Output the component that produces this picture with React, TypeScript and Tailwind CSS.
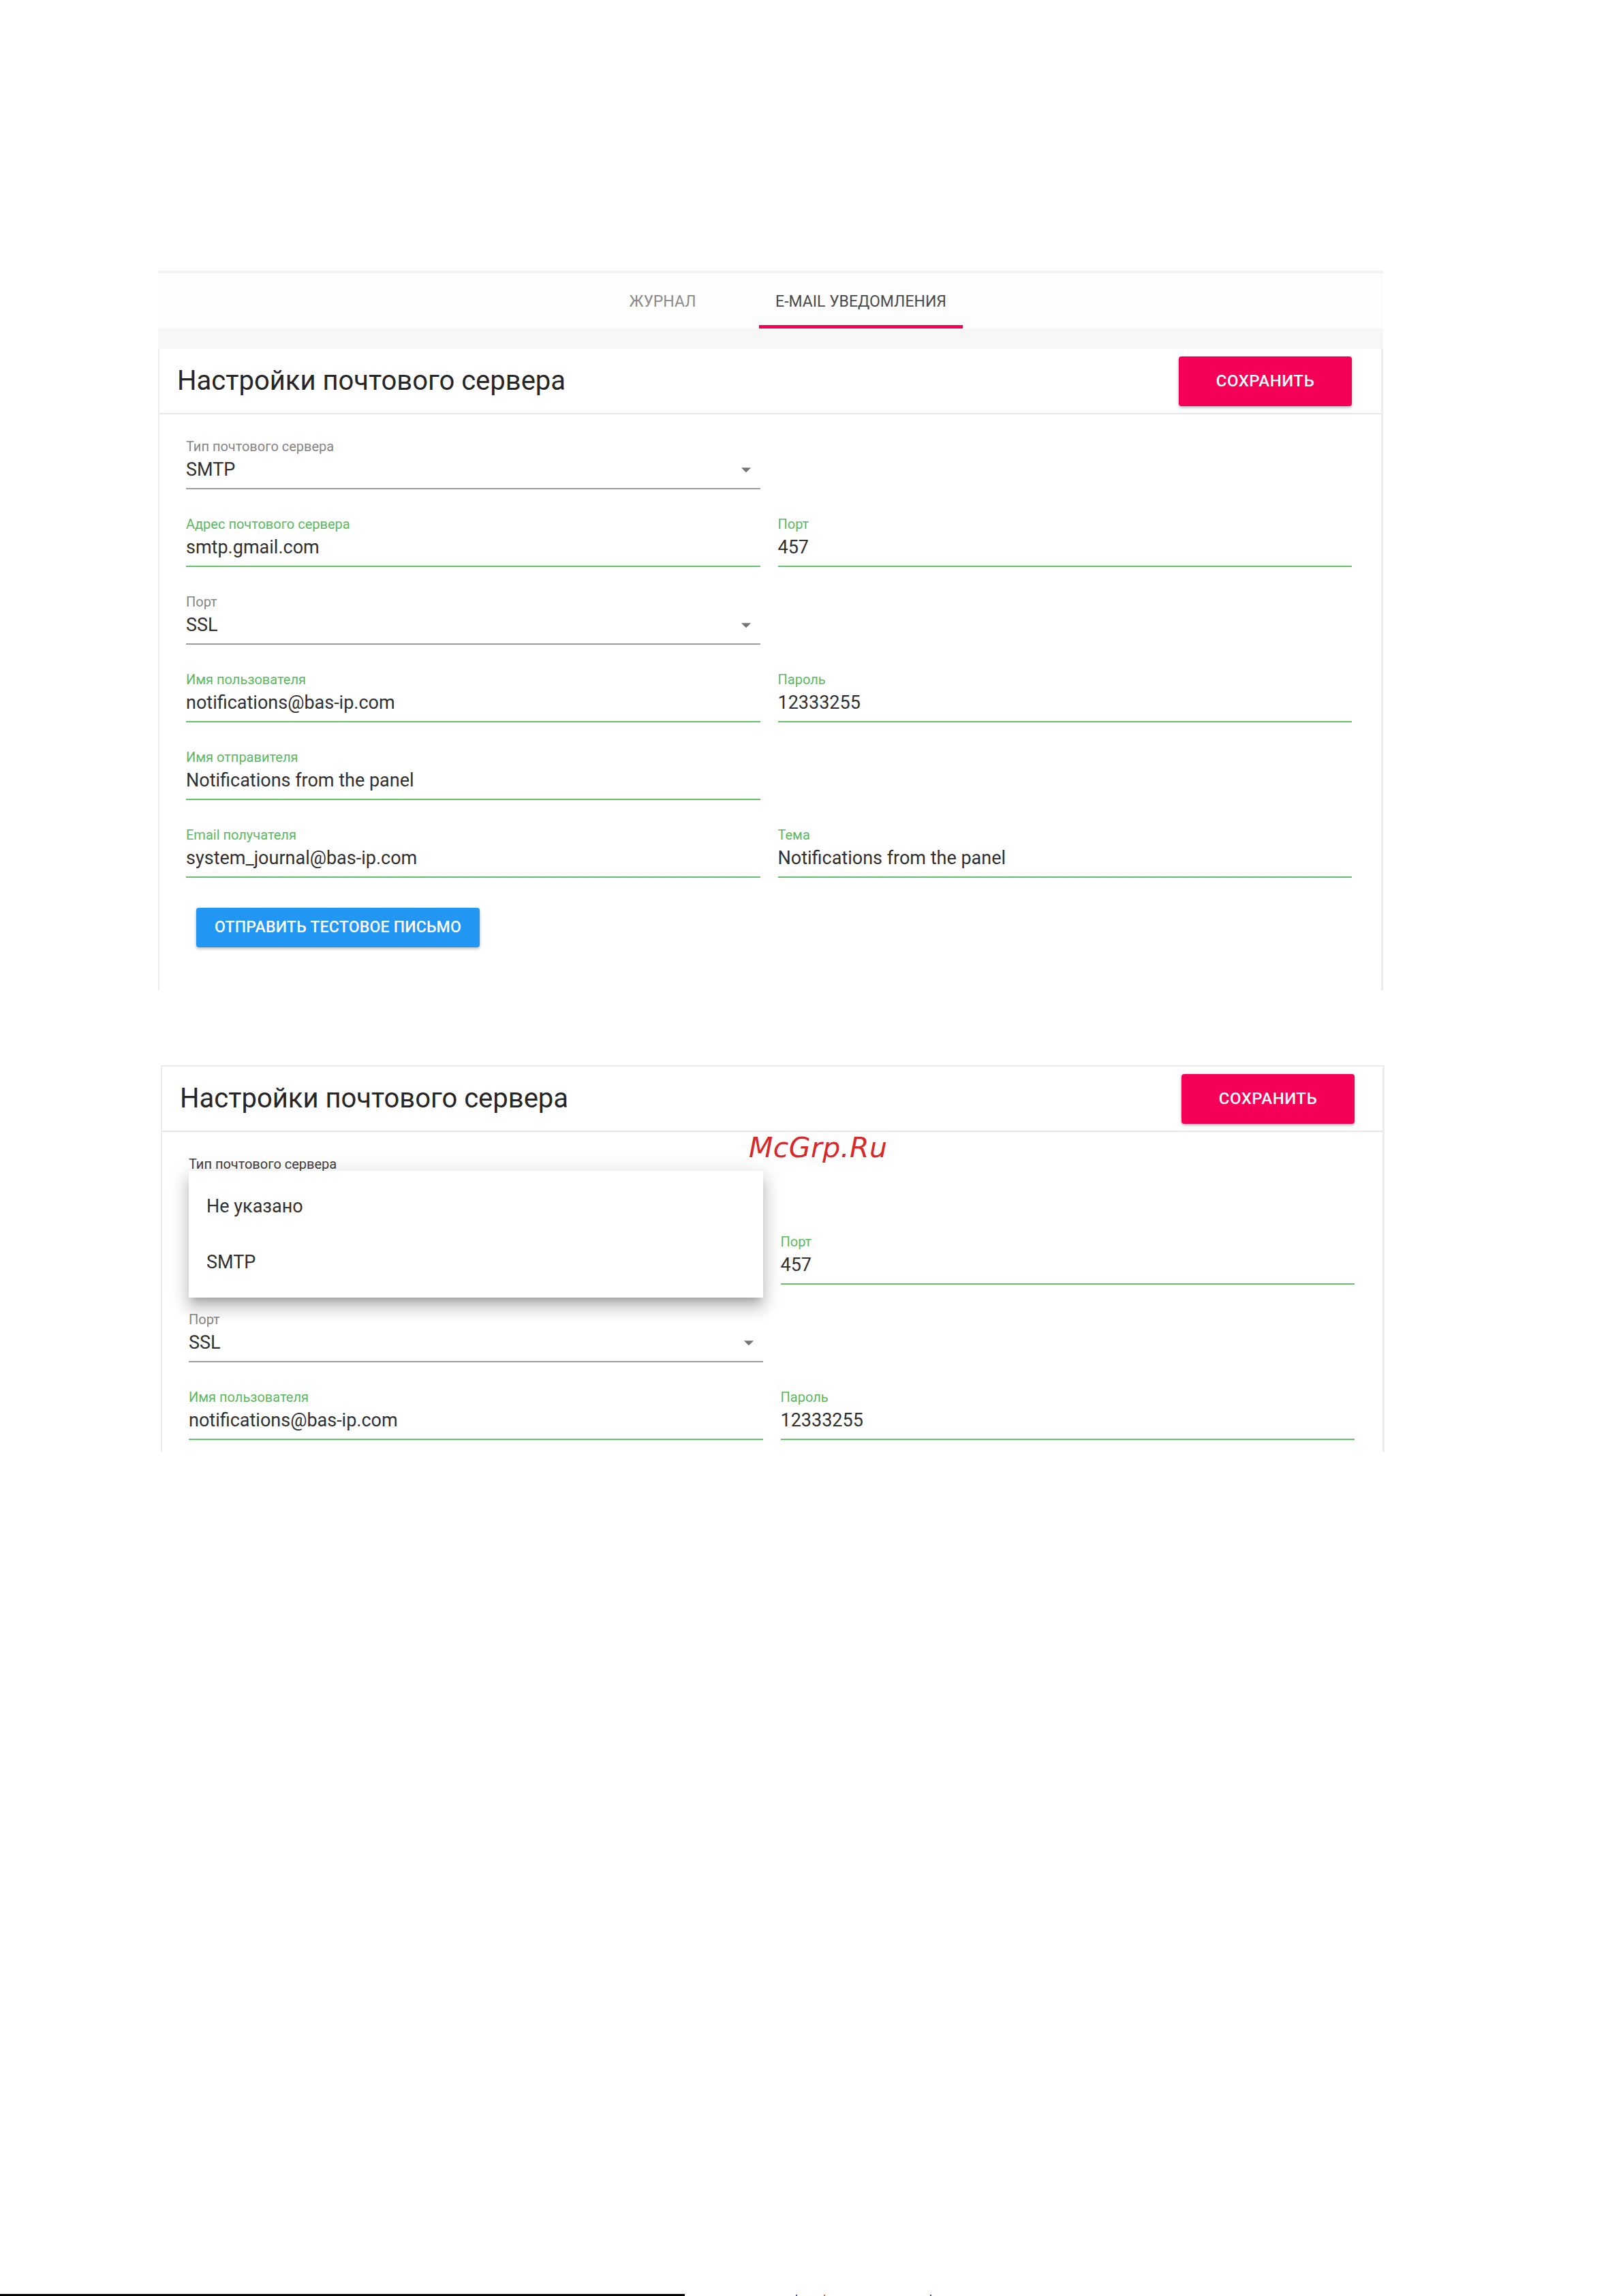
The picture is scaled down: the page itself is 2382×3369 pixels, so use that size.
import React from "react";

type FieldProps = {
  label: string;
  value?: string;
  select?: boolean;
  labelClass?: string;
};

const Arrow = () => (
  <svg
    viewBox="0 0 24 24"
    className="absolute right-[4px] top-0 h-[34px] w-[34px] fill-[#757575]"
  >
    <path d="M7 10l5 5 5-5z" />
  </svg>
);

const Field = ({ label, value, select, labelClass }: FieldProps) => (
  <div className="flex flex-col">
    <div
      className={`text-[20px] leading-[24px] ${
        labelClass ? labelClass : select ? "text-[#858585]" : "text-[#5cb85f]"
      }`}
    >
      {label}
    </div>
    <div
      className={`relative mt-[5px] border-b-2 pb-[10px] ${
        select ? "border-[#9c9c9c]" : "border-[#66bf6a]"
      }`}
    >
      <div className="text-[27px] leading-[34px] text-[#303030]">{value}</div>
      {select && <Arrow />}
    </div>
  </div>
);

const SaveButton = () => (
  <button className="flex h-[73px] w-[254px] items-center justify-center rounded-[4px] bg-[#f50057] text-[24px] font-medium uppercase tracking-[0.02em] text-white shadow-[0_2px_4px_rgba(0,0,0,0.3)]">
    Сохранить
  </button>
);

const CardHeader = ({ pr }: { pr: string }) => (
  <div
    className={`flex h-[96px] items-center justify-between border-b-2 border-[#e6e6e6] pl-[26px] ${pr}`}
  >
    <h2 className="text-[40px] font-normal text-[#262626]">
      Настройки почтового сервера
    </h2>
    <SaveButton />
  </div>
);

const Menu = () => (
  <div className="absolute left-0 top-[22px] z-10 w-full bg-white py-[11px] shadow-[0_10px_10px_-6px_rgba(0,0,0,0.2),0_16px_20px_2px_rgba(0,0,0,0.14),0_6px_28px_4px_rgba(0,0,0,0.12)]">
    {["Не указано", "SMTP"].map((item) => (
      <div
        key={item}
        className="flex h-[82px] items-center pl-[26px] text-[27px] text-[#303030]"
      >
        {item}
      </div>
    ))}
  </div>
);

export default function App() {
  return (
    <div className="flex h-[3369px] flex-col bg-white font-['Roboto',sans-serif]">
      {/* первая панель: вкладки + форма */}
      <div className="ml-[232px] mt-[397px] w-[1798px]">
        <div className="flex h-[85px] justify-center border-t-4 border-[#f3f3f3] bg-[#fdfdfd] pr-[18px] pt-[8px] text-[23px] uppercase">
          <div className="flex w-[283px] items-center justify-center border-b-[5px] border-transparent text-[#8a8a8a]">
            Журнал
          </div>
          <div className="flex w-[299px] items-center justify-center border-b-[5px] border-[#f50057] text-[#4a4a4a]">
            E-mail уведомления
          </div>
        </div>
        <div className="h-[30px] bg-[#f7f7f7]" />

        <div className="border-l-2 border-r-[3px] border-[#ececec] bg-white">
          <CardHeader pr="pr-[43px]" />
          <div className="pb-[63px] pl-[39px] pr-[43px] pt-[35px]">
            <div className="grid grid-cols-2 gap-x-[26px] gap-y-[39px]">
              <Field label="Тип почтового сервера" value="SMTP" select />
              <div />
              <Field label="Адрес почтового сервера" value="smtp.gmail.com" />
              <Field label="Порт" value="457" />
              <Field label="Порт" value="SSL" select />
              <div />
              <Field label="Имя пользователя" value="notifications@bas-ip.com" />
              <Field label="Пароль" value="12333255" />
              <Field label="Имя отправителя" value="Notifications from the panel" />
              <div />
              <Field label="Email получателя" value="system_journal@bas-ip.com" />
              <Field label="Тема" value="Notifications from the panel" />
            </div>
            <button className="ml-[15px] mt-[44px] flex h-[58px] w-[416px] items-center justify-center rounded-[4px] bg-[#2196f3] text-[23px] font-medium uppercase tracking-[0.01em] text-white shadow-[0_2px_4px_rgba(0,0,0,0.3)]">
              Отправить тестовое письмо
            </button>
          </div>
        </div>
      </div>

      {/* вторая панель: открытый список */}
      <div className="relative ml-[236px] mt-[110px] h-[567px] w-[1796px] overflow-hidden border-l-2 border-r-[3px] border-t-2 border-[#ececec] bg-white">
        <CardHeader pr="pr-[41px]" />
        <div className="pl-[39px] pr-[41px] pt-[35px]">
          <div className="grid grid-cols-2 gap-x-[26px] gap-y-[39px]">
            <div className="relative">
              <Field
                label="Тип почтового сервера"
                value="SMTP"
                select
                labelClass="text-[#3d3d3d]"
              />
              <Menu />
            </div>
            <div />
            <div />
            <Field label="Порт" value="457" />
            <Field label="Порт" value="SSL" select />
            <div />
            <Field label="Имя пользователя" value="notifications@bas-ip.com" />
            <Field label="Пароль" value="12333255" />
          </div>
        </div>
        <div className="absolute left-[861px] top-[99px] z-20 font-['DejaVu_Sans',sans-serif] text-[41px] italic leading-[40px] tracking-[0.01em] text-[#d62a2a]">
          McGrp.Ru
        </div>
      </div>

      <div className="mt-auto flex h-[3px] items-end">
        <div className="h-[3px] w-[1005px] bg-black" />
        <div className="ml-[163px] h-[2px] w-[2px] bg-[#3050d0]" />
        <div className="ml-[39px] h-[2px] w-[2px] bg-[#e06030]" />
        <div className="ml-[154px] h-[2px] w-[2px] bg-[#3050d0]" />
      </div>
    </div>
  );
}
